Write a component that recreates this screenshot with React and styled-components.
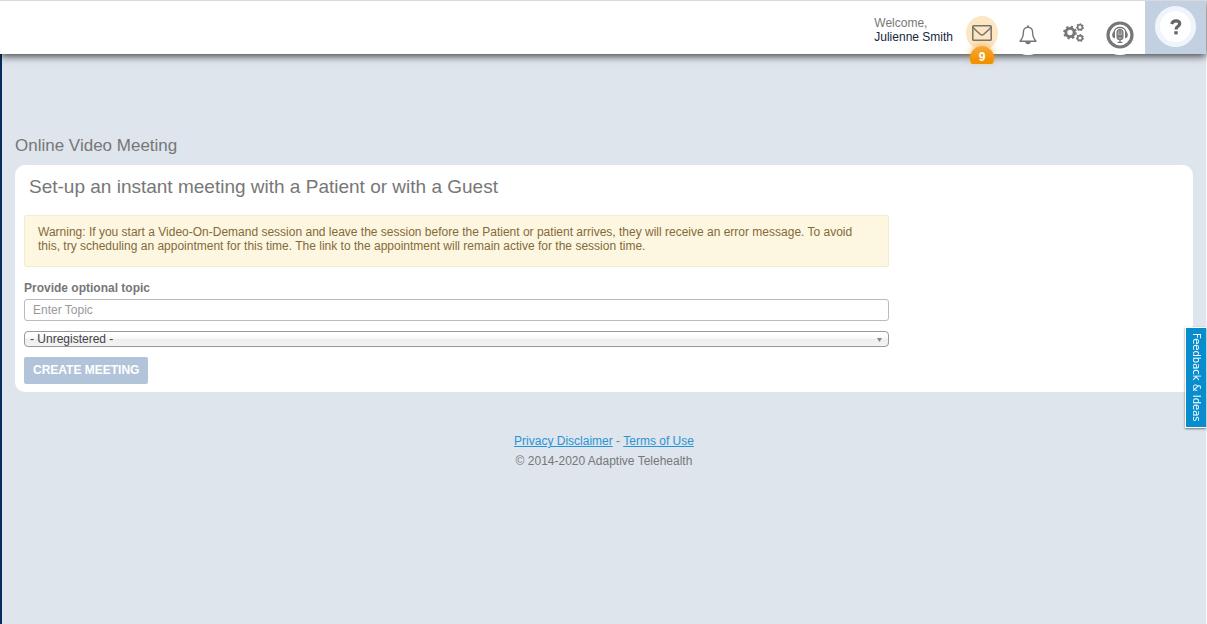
import { useState } from "react";
import styled, { createGlobalStyle } from "styled-components";

const EnvelopeIcon = () => (
  <svg width="20" height="16" viewBox="0 0 20 16" fill="none" stroke="#77726a" strokeWidth="1.5">
    <rect x="0.8" y="0.8" width="18.4" height="14.4" rx="0.8" />
    <path d="M1 2.2C2.4 4.4 5.4 6.6 8.2 9.2Q10 10.8 11.8 9.2C14.6 6.6 17.6 4.4 19 2.2" />
  </svg>
);

const BellIcon = () => (
  <svg width="18" height="20" viewBox="0 0 18 20" fill="none" stroke="#777" strokeWidth="1.4">
    <path
      d="M9 2.3C5.8 2.3 4.4 4.7 4.4 7.2C4.4 11.4 3.2 13.8 1 16.2H17C14.8 13.8 13.6 11.4 13.6 7.2C13.6 4.7 12.2 2.3 9 2.3Z"
      strokeLinejoin="round"
    />
    <path d="M9 0.4V2.4" strokeWidth="1.8" />
    <path d="M6.2 16.8A2.8 2.4 0 0 0 11.8 16.8Z" fill="#777" stroke="none" />
  </svg>
);

// teeth are the dashes of the outer circle
const Gear = ({ x, y, r, hole, teeth }) => {
  const body = (r + hole) / 2;
  const dash = (2 * Math.PI * r) / (teeth * 2);
  return (
    <g fill="none" stroke="#777">
      <circle cx={x} cy={y} r={body} strokeWidth={r - hole} />
      <circle cx={x} cy={y} r={r} strokeWidth={r * 0.45} strokeDasharray={dash} />
    </g>
  );
};

const GearsIcon = () => (
  <svg width="22" height="20" viewBox="0 0 22 20">
    <Gear x={7} y={9.5} r={5.6} hole={2.7} teeth={8} />
    <Gear x={17} y={4.2} r={3.2} hole={1.6} teeth={7} />
    <Gear x={17} y={15} r={3.2} hole={1.6} teeth={7} />
  </svg>
);

const MicIcon = () => (
  <svg width="28" height="28" viewBox="0 0 28 28" fill="none" stroke="#777">
    <circle cx="14" cy="14" r="12" strokeWidth="3.2" />
    <path d="M8 11.6C8.4 4.8 19.6 4.8 20 11.6" strokeWidth="1.4" />
    <path
      d="M9 10.6V17.4C5.2 17.4 5.2 10.6 9 10.6ZM19 10.6V17.4C22.8 17.4 22.8 10.6 19 10.6Z"
      fill="#777"
      stroke="none"
    />
    <rect x="11.1" y="8.6" width="5.8" height="10" rx="2.9" fill="#aaa" strokeWidth="1.3" />
    <path d="M11.4 14.2H16.6V16.4H11.4Z" fill="#777" stroke="none" />
    <path d="M14 9.6V13" strokeWidth="1.2" />
    <path d="M14 19V21.4M11.6 21.4H16.4" strokeWidth="1.3" />
  </svg>
);

const QuestionIcon = () => (
  <svg width="12" height="16" viewBox="0 0 12 16" fill="none" stroke="#666" strokeWidth="3.2">
    <path d="M1.6 5C2.5 2.6 4.1 1.8 6 1.8C8.1 1.8 9.7 2.9 9.7 4.8C9.7 7.4 6 7.2 6 10.4" />
    <path d="M6 12.2V15.4" strokeWidth="3.4" />
  </svg>
);

const Header = () => (
  <HeaderBar>
    <Welcome>
      Welcome,
      <UserName>Julienne Smith</UserName>
    </Welcome>
    <Actions>
      <ActionButton type="button" aria-label="Messages">
        <MailCircle>
          <EnvelopeIcon />
        </MailCircle>
        <Badge>9</Badge>
      </ActionButton>
      <ActionButton type="button" aria-label="Notifications">
        <WhiteCircle>
          <BellIcon />
        </WhiteCircle>
      </ActionButton>
      <ActionButton type="button" aria-label="Settings">
        <GearsIcon />
      </ActionButton>
      <ActionButton type="button" aria-label="Support">
        <WhiteCircle>
          <MicIcon />
        </WhiteCircle>
      </ActionButton>
    </Actions>
    <HelpButton type="button" aria-label="Help">
      <HelpCircle>
        <QuestionIcon />
      </HelpCircle>
    </HelpButton>
  </HeaderBar>
);

const App = () => {
  const [topic, setTopic] = useState("");

  return (
    <Page>
      <GlobalStyle />
      <Header />
      <Content>
        <PageTitle>Online Video Meeting</PageTitle>
        <Card>
          <CardTitle>Set-up an instant meeting with a Patient or with a Guest</CardTitle>
          <Form onSubmit={(e) => e.preventDefault()}>
            <Alert>
              Warning: If you start a Video-On-Demand session and leave the session before the
              Patient or patient arrives, they will receive an error message. To avoid this, try
              scheduling an appointment for this time. The link to the appointment will remain
              active for the session time.
            </Alert>
            <Label htmlFor="topic">Provide optional topic</Label>
            <Input
              id="topic"
              type="text"
              placeholder="Enter Topic"
              value={topic}
              onChange={(e) => setTopic(e.target.value)}
            />
            <SelectWrap>
              <Select aria-label="Participant">
                <option>- Unregistered -</option>
              </Select>
              <Arrow viewBox="0 0 5 4">
                <path d="M0 0H5L2.5 4Z" />
              </Arrow>
            </SelectWrap>
            <SubmitButton type="submit">CREATE MEETING</SubmitButton>
          </Form>
        </Card>
        <Footer>
          <div>
            <a href="#privacy">Privacy Disclaimer</a> - <a href="#terms">Terms of Use</a>
          </div>
          <div>© 2014-2020 Adaptive Telehealth</div>
        </Footer>
      </Content>
      <FeedbackTab type="button">Feedback &amp; Ideas</FeedbackTab>
    </Page>
  );
};

export default App;

const GlobalStyle = createGlobalStyle`
  * {
    box-sizing: border-box;
  }

  body {
    margin: 0;
    background: #dee5ed;
    color: #777;
    font-family: "Liberation Sans", Arial, sans-serif;
    font-size: 12px;
    line-height: 14px;
  }

  button,
  input,
  select {
    font-family: inherit;
    font-size: 12px;
  }
`;

const Page = styled.div`
  display: flex;
  flex-direction: column;
  min-height: 100vh;
  border-right: 1px solid #f4f6f8;
`;

const HeaderBar = styled.header`
  position: relative;
  display: flex;
  justify-content: flex-end;
  height: 54px;
  background: #fff;
  border-top: 1px solid #d9d9d9;
  box-shadow: 0 2px 8px rgba(0, 0, 0, 0.75);
`;

const Welcome = styled.div`
  padding-top: 15px;
  margin-right: 6px;
`;

const UserName = styled.div`
  color: #14273d;
`;

const Actions = styled.nav`
  display: flex;
  padding: 12px 2px 0 0;
`;

const ActionButton = styled.button`
  position: relative;
  display: flex;
  align-items: center;
  justify-content: center;
  width: 46px;
  height: 40px;
  padding: 0;
  border: none;
  background: none;
  color: #777;
  cursor: pointer;
`;

const Circle = styled.span`
  display: flex;
  flex: none;
  align-items: center;
  justify-content: center;
  border-radius: 50%;
`;

const MailCircle = styled(Circle)`
  width: 32px;
  height: 34px;
  background: #fce6c3;
`;

const WhiteCircle = styled(Circle)`
  width: 40px;
  height: 40px;
  margin-top: 3px;
  background: #fff;
`;

const Badge = styled.span`
  position: absolute;
  top: 33px;
  left: 11px;
  width: 24px;
  height: 18px;
  padding-top: 4px;
  border-radius: 12px 12px 2px 2px / 12px 12px 6px 6px;
  background: linear-gradient(#f5a93a, #f39200 80%);
  box-shadow: 0 -2px 6px rgba(245, 156, 17, 0.5);
  color: #fff;
  font-weight: bold;
  line-height: 14px;
`;

const HelpButton = styled.button`
  display: flex;
  justify-content: center;
  width: 61px;
  padding: 5px 0 0;
  border: none;
  background: #c2d0e1;
  cursor: pointer;
`;

const HelpCircle = styled(Circle)`
  width: 41px;
  height: 41px;
  border: 5px solid #f0f5fb;
  background: #fff;
`;

const Content = styled.main`
  flex: 1;
  padding: 82px 13px 0;
  border-left: 2px solid #0a2c5c;
`;

const PageTitle = styled.h1`
  margin: 0 0 9px;
  font-size: 17px;
  font-weight: normal;
  line-height: 20px;
`;

const Card = styled.section`
  padding: 10px 16px 8px 9px;
  border-radius: 10px;
  background: #fff;
`;

const CardTitle = styled.h2`
  margin: 0 0 17px 5px;
  font-size: 19px;
  font-weight: normal;
  line-height: 23px;
`;

const Form = styled.form`
  width: 75%;
`;

const Alert = styled.div`
  padding: 9px 13px 13px;
  border: 1px solid #f5eccb;
  border-radius: 2px;
  background: #fdf7e2;
  color: #846a37;
`;

const Label = styled.label`
  display: block;
  margin: 14px 0 4px;
  font-weight: bold;
`;

const Input = styled.input`
  display: block;
  width: 100%;
  height: 22px;
  padding: 0 8px;
  border: 1px solid #bbb;
  border-radius: 3px;
  color: #555;

  &::placeholder {
    color: #999;
  }
`;

const SelectWrap = styled.div`
  position: relative;
  margin: 10px 0;
`;

const Select = styled.select`
  display: block;
  width: 100%;
  height: 16px;
  padding: 0 5px;
  appearance: none;
  border: 1px solid #999;
  border-radius: 4px;
  background: linear-gradient(#fff 20%, #f6f6f6 50%, #eee 52%, #f4f4f4 100%);
  color: #444;
  line-height: 14px;
`;

const Arrow = styled.svg`
  position: absolute;
  top: 7px;
  right: 7px;
  width: 5px;
  height: 4px;
  fill: #888;
  pointer-events: none;
`;

const SubmitButton = styled.button`
  display: block;
  height: 27px;
  padding: 0 9px 2px;
  border: none;
  border-radius: 2px;
  background: #b2c4d9;
  color: #fff;
  font-weight: bold;
  cursor: pointer;
`;

const Footer = styled.footer`
  margin-top: 39px;
  line-height: 20px;
  text-align: center;

  a {
    color: #2a94d3;
  }
`;

const FeedbackTab = styled.button`
  position: fixed;
  top: 327px;
  right: 1px;
  width: 21px;
  height: 101px;
  padding: 0;
  border: 1px solid #fff;
  border-right: none;
  background: #078ccd;
  box-shadow: 0 1px 2px rgba(0, 0, 0, 0.5);
  color: #fff;
  writing-mode: vertical-rl;
  cursor: pointer;

  && {
    font-family: "DejaVu Sans", sans-serif;
    font-size: 10px;
  }
`;
